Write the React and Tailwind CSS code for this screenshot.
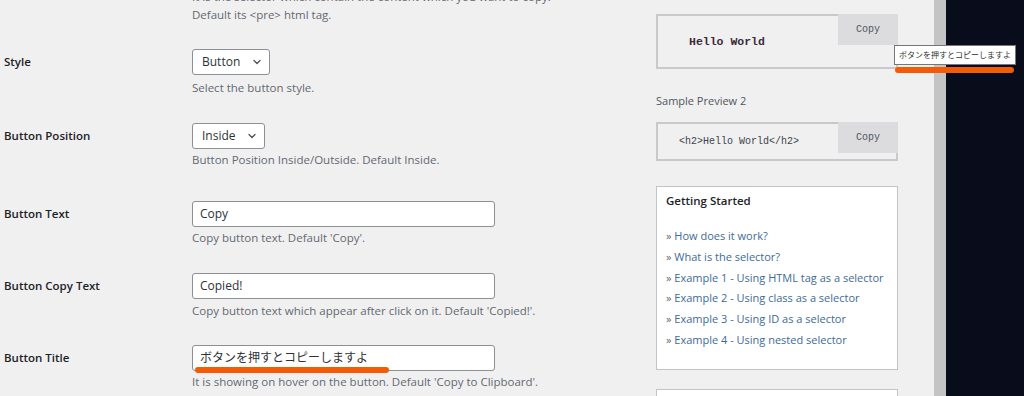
import React from "react";

const sans = "font-['Open_Sans','Noto_Sans_CJK_JP',sans-serif]";
const mono = "font-['Liberation_Mono','DejaVu_Sans_Mono',monospace]";

function Chevron() {
  return (
    <svg width="12" height="12" viewBox="0 0 16 16" className="shrink-0">
      <path d="M4 6l4 4 4-4" fill="none" stroke="#50575e" strokeWidth="1.8" strokeLinecap="round" strokeLinejoin="round" />
    </svg>
  );
}

function Select({ value, width }) {
  return (
    <div
      className={`flex h-[26px] items-center justify-between rounded-[3px] border border-[#8c8f94] bg-white pl-[9px] pr-[6px] text-[12px] text-[#2c3338] ${width}`}
    >
      <span>{value}</span>
      <Chevron />
    </div>
  );
}

function TextInput({ value, mark }) {
  return (
    <div className="relative flex h-[26px] w-[303px] items-center rounded-[3px] border border-[#8c8f94] bg-white px-[7px] text-[12px] text-[#2c3338]">
      <span>{value}</span>
      {mark && (
        <span className="absolute left-[2px] top-[21px] h-[6px] w-[194px] rounded-full bg-[#f45b06]" />
      )}
    </div>
  );
}

function Row({ label, control, desc, top, descTop }) {
  return (
    <div className={`flex ${top}`}>
      <div className="flex h-[26px] w-[192px] shrink-0 items-center pl-1 text-[11.5px] font-semibold text-[#1d2327]">
        {label}
      </div>
      <div>
        {control}
        <p className={`${descTop} text-[11.5px] leading-[18px] text-[#646970]`}>{desc}</p>
      </div>
    </div>
  );
}

const links = [
  "How does it work?",
  "What is the selector?",
  "Example 1 - Using HTML tag as a selector",
  "Example 2 - Using class as a selector",
  "Example 3 - Using ID as a selector",
  "Example 4 - Using nested selector",
];

function CopyButton() {
  return (
    <div className={`absolute right-[-2px] top-[-2px] flex h-[31px] w-[60px] items-center justify-center bg-[#dcdcde] text-[10px] text-[#50575e] ${mono}`}>
      Copy
    </div>
  );
}

export default function App() {
  return (
    <div className={`flex h-[396px] w-[1024px] overflow-hidden ${sans}`}>
      {/* admin page */}
      <div className="flex w-[934px] shrink-0 bg-[#f0f0f1]">
        {/* settings form */}
        <div className="w-[656px] shrink-0">
          <div className="ml-[192px] -mt-[12px] text-[11.5px] leading-[18px] text-[#646970]">
            <p>It is the selector which contain the content which you want to copy.</p>
            <p>Default its &lt;pre&gt; html tag.</p>
          </div>

          <Row
            top="mt-[25px]"
            descTop="mt-[4px]"
            label="Style"
            control={<Select value="Button" width="w-[78px]" />}
            desc="Select the button style."
          />
          <Row
            top="mt-[26px]"
            descTop="mt-[2px]"
            label="Button Position"
            control={<Select value="Inside" width="w-[73px]" />}
            desc="Button Position Inside/Outside. Default Inside."
          />
          <Row
            top="mt-[32px]"
            descTop="mt-[2px]"
            label="Button Text"
            control={<TextInput value="Copy" />}
            desc="Copy button text. Default 'Copy'."
          />
          <Row
            top="mt-[26px]"
            descTop="mt-[3px]"
            label="Button Copy Text"
            control={<TextInput value="Copied!" />}
            desc="Copy button text which appear after click on it. Default 'Copied!'."
          />
          <Row
            top="mt-[25px]"
            descTop="mt-[2px]"
            label="Button Title"
            control={<TextInput value="ボタンを押すとコピーしますよ" mark />}
            desc="It is showing on hover on the button. Default 'Copy to Clipboard'."
          />
        </div>

        {/* sidebar */}
        <div className="w-[242px] shrink-0">
          <div className="relative mt-[14px] flex h-[55px] items-center border-2 border-[#c8c9cc] bg-[#f0f0f1] pl-[31px]">
            <span className={`text-[11.5px] font-bold text-[#3c2a3a] ${mono}`}>Hello World</span>
            <CopyButton />
            {/* hover tooltip */}
            <div className="absolute left-[236px] top-[29px] z-10 flex h-[20px] w-[122px] items-center justify-center whitespace-nowrap border border-[#767676] bg-white text-[8px] text-[#333] font-['Noto_Sans_CJK_JP',sans-serif]">
              ボタンを押すとコピーしますよ
            </div>
            <span className="absolute left-[237px] top-[51px] z-10 h-[6px] w-[119px] rounded-full bg-[#f45b06]" />
          </div>

          <p className="mt-[23px] text-[11px] leading-[18px] text-[#50575e]">Sample Preview 2</p>

          <div className="relative mt-[12px] flex h-[39px] items-center border-2 border-[#c8c9cc] bg-[#f0f0f1] pl-[21px]">
            <span className={`text-[10px] text-[#3c434a] ${mono}`}>&lt;h2&gt;Hello World&lt;/h2&gt;</span>
            <CopyButton />
          </div>

          <div className="mt-[25px] h-[184px] border border-[#c3c4c7] bg-white pl-[9px] pt-[5px]">
            <h3 className="text-[11.5px] font-semibold leading-[18px] text-[#1d2327]">Getting Started</h3>
            <ul className="mt-[16px] text-[11px] leading-[20.8px]">
              {links.map((l) => (
                <li key={l} className="text-[#3d6b9a]">
                  <span className="text-[#646970]">» </span>
                  {l}
                </li>
              ))}
            </ul>
          </div>

          <div className="mt-[19px] h-[40px] border border-[#c3c4c7] bg-white" />
        </div>
      </div>

      {/* browser scrollbar */}
      <div className="w-[12px] shrink-0 bg-[#c4c4c4]" />

      {/* desktop background */}
      <div className="flex-1 bg-[#090d1b]" />
    </div>
  );
}
